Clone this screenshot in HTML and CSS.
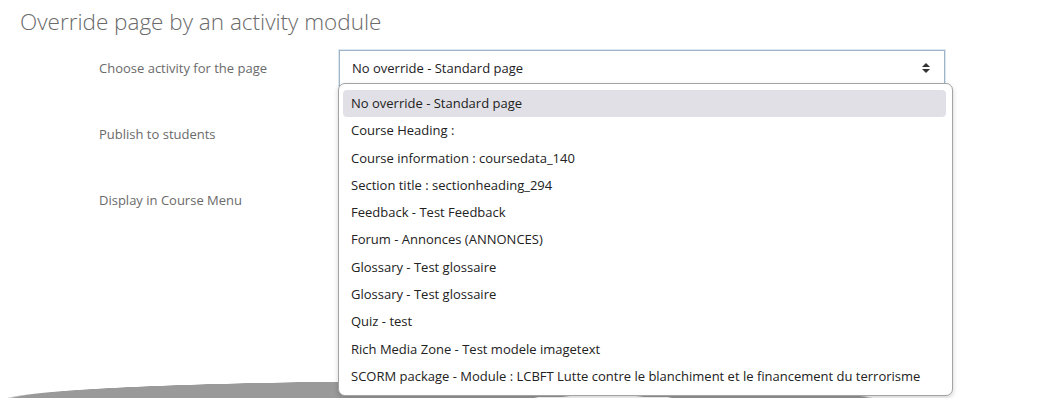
FILE: index.html
```html
<!DOCTYPE html>
<html lang="en">
<head>
  <meta charset="UTF-8">
  <title>Override page</title>
  <link rel="stylesheet" href="styles.css">
</head>
<body>

<main class="page">
  <h3 class="section-title">Override page by an activity module</h3>

  <div class="form">
    <div class="form-row">
      <label class="form-label">Choose activity for the page</label>
      <div class="select-wrap">
        <div class="select">
          <span>No override - Standard page</span>
          <svg class="select-arrow" width="8" height="12" viewBox="0 0 8 12">
            <path d="M0 5 L4 1 L8 5 Z M0 7 L4 11 L8 7 Z" fill="#333"/>
          </svg>
        </div>
        <ul class="dropdown">
          <li class="selected">No override - Standard page</li>
          <li>Course Heading :</li>
          <li>Course information : coursedata_140</li>
          <li>Section title : sectionheading_294</li>
          <li>Feedback - Test Feedback</li>
          <li>Forum - Annonces (ANNONCES)</li>
          <li>Glossary - Test glossaire</li>
          <li>Glossary - Test glossaire</li>
          <li>Quiz - test</li>
          <li>Rich Media Zone - Test modele imagetext</li>
          <li>SCORM package - Module : LCBFT Lutte contre le blanchiment et le financement du terrorisme</li>
        </ul>
      </div>
    </div>
    <div class="form-row">
      <label class="form-label">Publish to students</label>
    </div>
    <div class="form-row">
      <label class="form-label">Display in Course Menu</label>
    </div>
  </div>

  <div class="wave"></div>
</main>

</body>
</html>
```

FILE: styles.css
```css
:root {
  --text-main: #1d2125;
  --text-muted: #6a6a6a;
  --select-border: #9fb4c8;
  --menu-border: #a3a3a3;
  --item-active: #e1e0e6;
}

body {
  margin: 0;
  font-family: 'Open Sans', 'Noto Sans', sans-serif;
  background-color: #fff;
  color: var(--text-main);
}

.page {
  height: 100vh;
  display: flex;
  flex-direction: column;
  overflow: hidden;
}

.section-title {
  margin: 8px 0 0 20px;
  font-size: 22.5px;
  font-weight: 300;
  line-height: 28px;
  color: var(--text-muted);
}

.form {
  margin: 14px 0 0 99px;
}

.form-row {
  display: flex;
  height: 66px;
}

.form-label {
  width: 240px;
  font-size: 13px;
  color: var(--text-muted);
  line-height: 36px;
}

.select-wrap {
  position: relative;
}

.select {
  width: 606px;
  height: 36px;
  box-sizing: border-box;
  border: 1px solid var(--select-border);
  box-shadow: 0 0 0 1px #dce6ef;
  display: flex;
  align-items: center;
  justify-content: space-between;
  padding: 0 14px 0 12px;
  font-size: 13px;
}

.select-arrow {
  display: block;
}

.dropdown {
  position: absolute;
  top: 33px;
  left: -1px;
  width: 615px;
  box-sizing: border-box;
  margin: 0;
  padding: 6px 6px 5px 4px;
  list-style: none;
  background-color: #fff;
  border: 1px solid var(--menu-border);
  border-radius: 7px;
  box-shadow: 0 2px 5px rgba(0,0,0,0.18);
  z-index: 2;
}

.dropdown li {
  height: 27.3px;
  line-height: 27px;
  padding-left: 8px;
  font-size: 13px;
  color: #222;
  border-radius: 4px;
  white-space: nowrap;
}

.dropdown li.selected {
  background-color: var(--item-active);
}

.wave {
  margin-top: auto;
  height: 17px;
  flex-shrink: 0;
  background:
    radial-gradient(ellipse 125px 9px at 603px 24px, #fff 98%, transparent 100%),
    radial-gradient(ellipse 440px 20px at 440px 20px, #9a9a9a 98%, transparent 100%);
}
```
